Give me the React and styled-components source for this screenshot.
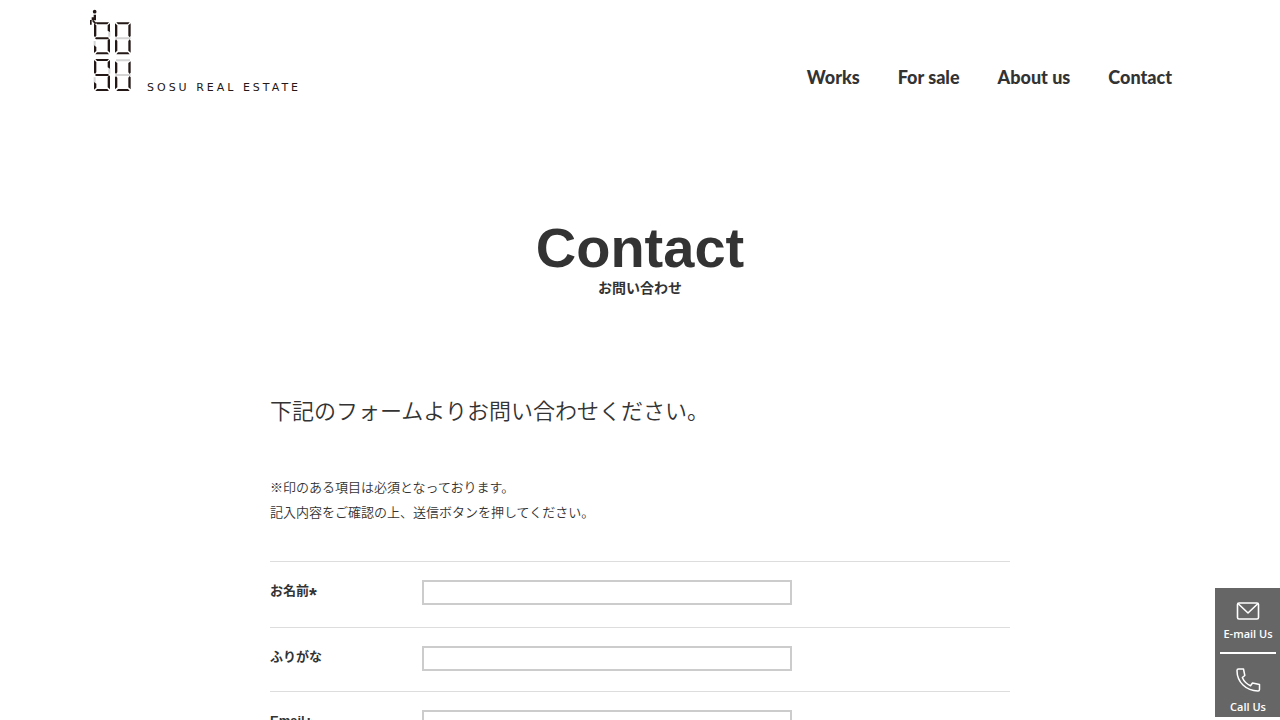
import React from "react";
import styled, { createGlobalStyle } from "styled-components";

const GlobalStyle = createGlobalStyle`
  *, *::before, *::after { box-sizing: border-box; }
  body {
    margin: 0;
    background: #fff;
    color: #333;
    font-family: "Liberation Sans", "Noto Sans CJK JP", sans-serif;
    font-size: 13px;
  }
  h1, p { margin: 0; }
  a { color: inherit; text-decoration: none; }
`;

const Header = styled.header`
  display: flex;
  justify-content: space-between;
  align-items: flex-end;
  max-width: 1100px;
  margin: 0 auto;
  padding: 9px 18px 0 0;
`;

const Brand = styled.a`
  display: flex;
  align-items: flex-end;
  gap: 15px;
`;

const BrandMark = styled.svg`
  display: block;
  width: 42px;
  height: 83px;
`;

const BrandName = styled.span`
  color: #231815;
  font-family: "DejaVu Sans", sans-serif;
  font-size: 11px;
  line-height: 8px;
  letter-spacing: 3px;
`;

const Nav = styled.nav`
  display: flex;
  gap: 38px;
  padding-bottom: 3px;
`;

const NavLink = styled.a`
  font-family: Lato, sans-serif;
  font-size: 18px;
  font-weight: 900;
  line-height: 24px;
`;

const Main = styled.main`
  max-width: 740px;
  margin: 0 auto;
  padding: 126px 0 60px;
`;

const PageTitle = styled.h1`
  display: flex;
  flex-direction: column;
  margin-bottom: 98px;
  font-size: 56px;
  line-height: 60px;
  text-align: center;
`;

const Subtitle = styled.span`
  font-size: 14px;
  line-height: 20px;
`;

const Lead = styled.p`
  margin-bottom: 47px;
  font-size: 22px;
  font-weight: 350;
  line-height: 32px;
`;

const Notes = styled.p`
  margin-bottom: 36px;
  font-weight: 350;
  line-height: 25px;
`;

const Field = styled.div`
  display: grid;
  grid-template-columns: 152px 1fr;
  min-height: ${({ $required }) => ($required ? 66 : 64)}px;
  padding: 18px 0 20px;
  border-top: 1px solid #ddd;
  align-items: start;
`;

const Label = styled.label`
  font-weight: bold;
  line-height: 22px;
`;

const Required = styled.span`
  font-size: 20px;
  line-height: 1px;
  vertical-align: -7px;
`;

const Input = styled.input`
  width: 50%;
  min-width: 370px;
  height: 25px;
  padding: 2px 4px;
  border: 2px solid #ccc;
  background: #fff;
  font-size: 13px;
`;

const SidePanel = styled.aside`
  position: fixed;
  right: 0;
  bottom: 3px;
  width: 65px;
  padding: 0 4px 0 5px;
  background: #666;
`;

const SideLink = styled.a`
  display: flex;
  flex-direction: column;
  align-items: center;
  height: ${({ $tall }) => ($tall ? 63 : 66)}px;
  padding-top: ${({ $tall }) => ($tall ? 13 : 13)}px;
  border-bottom: ${({ $tall }) => ($tall ? "0" : "2px solid #fff")};
  color: #fff;
  font-family: "Open Sans", sans-serif;
  font-size: 11px;
  font-weight: 600;
  line-height: 18px;
  white-space: nowrap;
`;

const SideIcon = styled.svg`
  display: block;
  flex: none;
  width: 26px;
  height: ${({ $tall }) => ($tall ? 26 : 20)}px;
  margin-bottom: ${({ $tall }) => ($tall ? 5 : 4)}px;
  fill: none;
  stroke: #fff;
  stroke-linejoin: round;
  stroke-linecap: round;
`;

const fields = [
  { id: "name", label: "お名前", type: "text", required: true },
  { id: "kana", label: "ふりがな", type: "text", required: false },
  { id: "email", label: "Email", type: "email", required: true },
];

function Logo() {
  return (
    <BrandMark viewBox="30 27 126 249" aria-hidden="true">
      <circle cx="44" cy="35" r="5.5" fill="#231815" />
      <path d="M41 44h7v17h-7zM35 52h6v9h-6zM30 60h5v14h-5z" fill="#231815" />
      <path d="M38 61l9 10" stroke="#231815" strokeWidth="5" />
      <g fill="none" stroke="#d4d4d4" strokeWidth="6">
        <path d="M88 92v18M44 123v15M106 115h46M88 204v17M44 232v16M108 181h42M106 225h46" />
      </g>
      <g fill="#231815">
        <path d="M46 67h41l-5 6H51zM48 112h36l3 3-3 3H48l-3-3zM51 157h31l5 6H46zM109 67h40l-5 6h-30zM114 157h30l5 6h-40z" />
        <path d="M46 177h41l-5 6H51zM48 222h36l3 3-3 3H48l-3-3zM51 267h31l5 6H46zM114 267h30l5 6h-40z" />
        <path d="M42 70l7 6v31l-4 5-3-4zM90 70v26l-7-4V76zM90 119v39l-7-6v-31l4-5zM42 136l7 5v12l-7 6z" />
        <path d="M105 70l7 6v31l-4 5-3-4zM152 70v38l-3 4-4-5V76zM105 122l3-4 4 5v29l-7 6zM152 122v36l-7-6v-29l4-5z" />
        <path d="M42 180l7 6v31l-4 5-3-4zM90 180v26l-7-4v-16zM90 229v39l-7-6v-31l4-5zM42 246l7 5v12l-7 6z" />
        <path d="M105 184l7 5v28l-4 5-3-4zM152 184v34l-3 4-4-5v-28zM105 232l3-4 4 5v29l-7 6zM152 232v36l-7-6v-29l4-5z" />
      </g>
    </BrandMark>
  );
}

export default function App() {
  return (
    <>
      <GlobalStyle />
      <Header>
        <Brand href="#home">
          <Logo />
          <BrandName>SOSU REAL ESTATE</BrandName>
        </Brand>
        <Nav>
          <NavLink href="#works">Works</NavLink>
          <NavLink href="#for-sale">For sale</NavLink>
          <NavLink href="#about">About us</NavLink>
          <NavLink href="#contact">Contact</NavLink>
        </Nav>
      </Header>
      <Main>
        <PageTitle>
          Contact
          <Subtitle>お問い合わせ</Subtitle>
        </PageTitle>
        <Lead>下記のフォームよりお問い合わせください。</Lead>
        <Notes>
          ※印のある項目は必須となっております。
          <br />
          記入内容をご確認の上、送信ボタンを押してください。
        </Notes>
        <form>
          {fields.map(({ id, label, type, required }) => (
            <Field key={id} $required={required}>
              <Label htmlFor={id}>
                {label}
                {required && <Required>*</Required>}
              </Label>
              <Input id={id} name={id} type={type} required={required} />
            </Field>
          ))}
        </form>
      </Main>
      <SidePanel>
        <SideLink href="#mail">
          <SideIcon viewBox="0 0 26 20" strokeWidth="1.6" aria-hidden="true">
            <rect x="2.500" y="2" width="21" height="16" rx="1.5" />
            <path d="M3.500 3l9.500 9L22.500 3" />
          </SideIcon>
          E-mail Us
        </SideLink>
        <SideLink href="#call" $tall>
          <SideIcon $tall viewBox="0 0 26 26" strokeWidth="1.5" aria-hidden="true">
            <path d="M2 3.5Q2 2 3.500 2H8.500L9.800 8.500L7.300 10.500C9 14.500 11.500 17 15.500 18.700L17.500 16L24.500 17.500V22.500Q24.500 24 23 24C11 24 2 15 2 3.500Z" />
          </SideIcon>
          Call Us
        </SideLink>
      </SidePanel>
    </>
  );
}
